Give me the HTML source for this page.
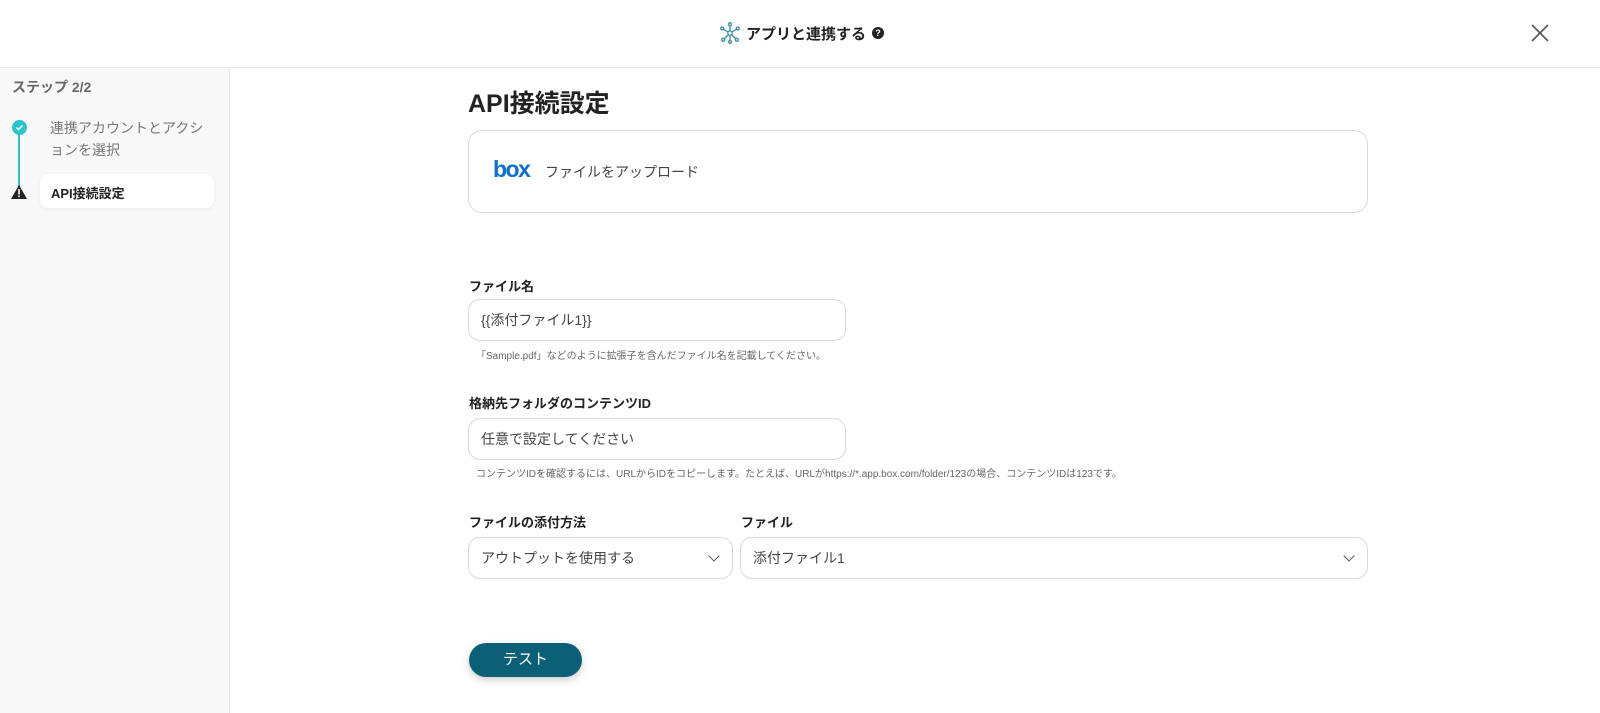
<!DOCTYPE html>
<html><head><meta charset="utf-8"><style>
*{box-sizing:border-box;margin:0;padding:0}
body{width:1600px;height:713px;overflow:hidden;background:#fff;font-family:"Liberation Sans","Noto Sans CJK JP",sans-serif;color:#222;position:relative}
.top{position:absolute;left:0;top:0;width:1600px;height:68px;border-bottom:1px solid #e4e4e4;background:#fff}
.title{position:absolute;left:720px;top:22px;font-size:15px;font-weight:bold;display:flex;align-items:center;gap:6px}
.side{position:absolute;left:0;top:69px;width:230px;height:644px;background:#f8f8f8;border-right:1px solid #e6e6e6}
.abs{position:absolute}
.lbl{position:absolute;left:469px;font-size:13px;font-weight:bold;color:#222}
.inp{position:absolute;border:1px solid #d6d9dd;border-radius:12px;background:#fff;font-size:14px;color:#444;padding-left:12px;display:flex;align-items:center}
.hint{position:absolute;font-size:10px;color:#666}
.chev{position:absolute;right:14px;top:14px;width:8px;height:8px;border-right:1.6px solid #555;border-bottom:1.6px solid #555;transform:rotate(45deg)}
</style></head><body>
<div class="top">
 <div class="title">
  <svg width="20" height="22" viewBox="0 0 20 22" fill="none" stroke="#3a8ea8" stroke-width="1.3"><circle cx="10" cy="11" r="2.2"/><line x1="10" y1="9" x2="10" y2="3"/><circle cx="10" cy="2.2" r="1.5"/><line x1="8" y1="10" x2="3" y2="7"/><circle cx="2.2" cy="6.5" r="1.5"/><line x1="12" y1="10" x2="17" y2="7"/><circle cx="17.8" cy="6.5" r="1.5"/><line x1="8.5" y1="12.5" x2="4" y2="17"/><circle cx="3.2" cy="17.8" r="1.5"/><line x1="11.5" y1="12.5" x2="16" y2="17"/><circle cx="16.8" cy="17.8" r="1.5"/><line x1="10" y1="13" x2="10" y2="19"/><circle cx="10" cy="20" r="1.3"/></svg>
  <span>アプリと連携する</span>
  <span style="display:inline-block;width:12px;height:12px;border-radius:50%;background:#222;color:#fff;font-size:9px;text-align:center;line-height:12px">?</span>
 </div>
 <svg class="abs" style="left:1531px;top:24px" width="18" height="18" stroke="#555" stroke-width="1.6"><line x1="1" y1="1" x2="17" y2="17"/><line x1="17" y1="1" x2="1" y2="17"/></svg>
</div>
<div class="side">
 <div class="abs" style="left:12px;top:8px;font-size:14px;font-weight:bold;color:#666">ステップ 2/2</div>
 <div class="abs" style="left:18px;top:58px;width:2px;height:60px;background:#2cc4cc"></div>
 <div class="abs" style="left:12px;top:51px;width:15px;height:15px;border-radius:50%;background:#2cc4cc"><svg width="15" height="15"><path d="M4.5 7.5l2 2 4-4" stroke="#fff" stroke-width="1.5" fill="none"/></svg></div>
 <div class="abs" style="left:50px;top:48px;font-size:14px;color:#777;line-height:22px;width:160px">連携アカウントとアクションを選択</div>
 <svg class="abs" style="left:11px;top:116px" width="16" height="14"><path d="M8 0L16 14H0Z" fill="#222"/><rect x="7.2" y="4" width="1.6" height="5.5" fill="#fff"/><rect x="7.2" y="10.5" width="1.6" height="1.6" fill="#fff"/></svg>
 <div class="abs" style="left:40px;top:105px;width:174px;height:34px;background:#fff;border-radius:8px;box-shadow:0 1px 4px rgba(0,0,0,.06);font-size:13px;font-weight:bold;padding:9px 11px">API接続設定</div>
</div>
<div class="abs" style="left:468px;top:84px;font-size:25px;font-weight:bold">API接続設定</div>
<div class="abs" style="left:468px;top:130px;width:900px;height:83px;border:1px solid #d6d9dd;border-radius:14px"></div>
<div class="abs" style="left:493px;top:156px;font-size:23px;font-weight:bold;color:#0c6fd1;letter-spacing:-1.5px">box</div>
<div class="abs" style="left:545px;top:162px;font-size:14px;color:#444">ファイルをアップロード</div>
<div class="lbl" style="top:276px">ファイル名</div>
<div class="inp" style="left:468px;top:299px;width:378px;height:42px">{{添付ファイル1}}</div>
<div class="hint" style="left:476px;top:347px">「Sample.pdf」などのように拡張子を含んだファイル名を記載してください。</div>
<div class="lbl" style="top:393px">格納先フォルダのコンテンツID</div>
<div class="inp" style="left:468px;top:418px;width:378px;height:42px">任意で設定してください</div>
<div class="hint" style="left:476px;top:465px">コンテンツIDを確認するには、URLからIDをコピーします。たとえば、URLがhttps://*.app.box.com/folder/123の場合、コンテンツIDは123です。</div>
<div class="lbl" style="top:512px">ファイルの添付方法</div>
<div class="lbl" style="top:512px;left:741px">ファイル</div>
<div class="inp" style="left:468px;top:537px;width:265px;height:42px">アウトプットを使用する<div class="chev"></div></div>
<div class="inp" style="left:740px;top:537px;width:628px;height:42px">添付ファイル1<div class="chev"></div></div>
<div class="abs" style="left:469px;top:643px;width:113px;height:34px;border-radius:17px;background:#0b6078;color:#fff;font-size:15px;text-align:center;line-height:34px;box-shadow:0 3px 8px rgba(0,0,0,.2)">テスト</div>
</body></html>
